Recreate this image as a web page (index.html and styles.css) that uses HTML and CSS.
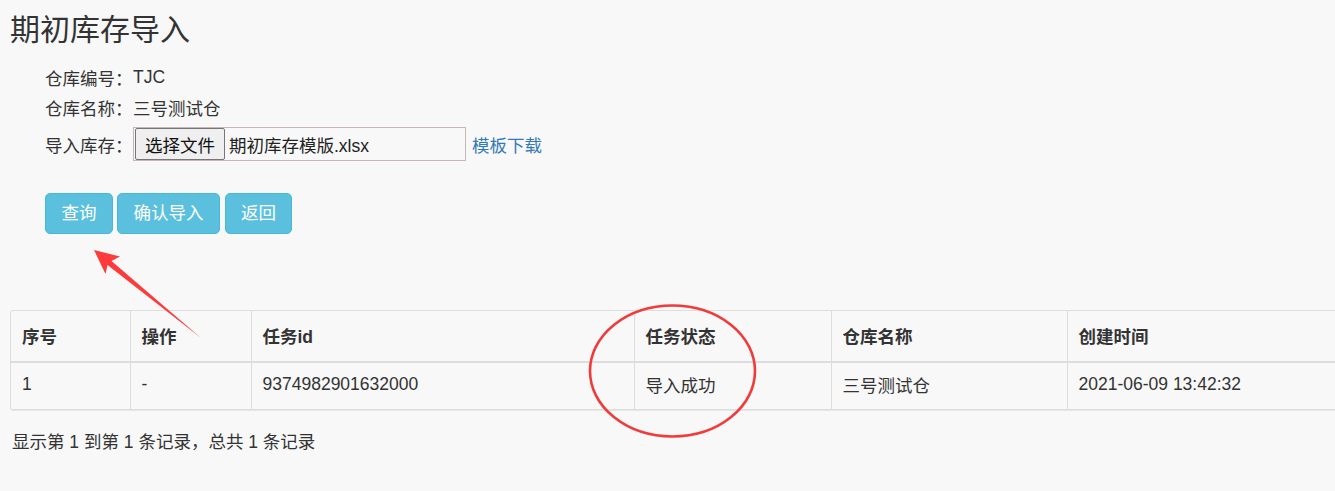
FILE: index.html
```html
<!DOCTYPE html>
<html lang="zh-CN">
<head>
<meta charset="utf-8">
<title>期初库存导入</title>
<link rel="stylesheet" href="styles.css">
</head>
<body>
<div class="page">
  <h1 class="title">期初库存导入</h1>
  <div class="form">
    <div class="row"><span class="label">仓库编号：</span><span>TJC</span></div>
    <div class="row"><span class="label">仓库名称：</span><span>三号测试仓</span></div>
    <div class="row file-row">
      <span class="label">导入库存：</span>
      <div class="file-box"><span class="file-btn">选择文件</span><span class="file-name">期初库存模版.xlsx</span></div>
      <a class="link" href="#">模板下载</a>
    </div>
    <div class="actions">
      <button class="btn">查询</button>
      <button class="btn">确认导入</button>
      <button class="btn btn-back">返回</button>
    </div>
  </div>
  <div class="table-wrap">
    <table class="grid">
      <colgroup>
        <col class="c1"><col class="c2"><col class="c3"><col class="c4"><col class="c5"><col>
      </colgroup>
      <thead>
        <tr><th>序号</th><th>操作</th><th>任务id</th><th>任务状态</th><th>仓库名称</th><th>创建时间</th></tr>
      </thead>
      <tbody>
        <tr><td>1</td><td>-</td><td>9374982901632000</td><td>导入成功</td><td>三号测试仓</td><td>2021-06-09 13:42:32</td></tr>
      </tbody>
    </table>
  </div>
  <div class="footer">显示第 1 到第 1 条记录，总共 1 条记录</div>
</div>
<svg class="annot" width="1335" height="491" viewBox="0 0 1335 491">
  <polygon points="94,250 120,256.5 111.5,261 201,338 107.5,265 105.5,274" fill="#fd3b3b"/>
  <ellipse cx="672.5" cy="371" rx="82.5" ry="65.5" fill="none" stroke="#f23a3a" stroke-width="2.6"/>
</svg>
</body>
</html>
```

FILE: styles.css
```css
html, body {
  margin: 0;
  padding: 0;
  overflow: hidden;
  background: #f8f8f8;
}
body {
  font-family: "Liberation Sans", "Noto Sans CJK SC", sans-serif;
  font-size: 17.5px;
  color: #333;
  position: relative;
  width: 1335px;
  height: 491px;
}
.page {
  padding-left: 10px;
}
.title {
  margin: 13px 0 0;
  font-size: 30px;
  font-weight: normal;
  line-height: 33px;
}
.form {
  padding-left: 35px;
  margin-top: 16px;
}
.row {
  display: flex;
  align-items: center;
  height: 30px;
}
.label {
  width: 88px;
  flex: none;
}
.file-row {
  margin-top: 5px;
  height: 34px;
}
.file-box {
  box-sizing: border-box;
  width: 333px;
  height: 34px;
  border: 1px solid #c7b6b6;
  display: flex;
  align-items: flex-end;
  padding: 0 0 0 1px;
}
.file-btn {
  box-sizing: border-box;
  height: 32px;
  width: 90px;
  border: 1px solid #767676;
  border-radius: 2px;
  background: #efefef;
  color: #111;
  display: flex;
  align-items: center;
  justify-content: center;
  font-size: 17.5px;
}
.file-name {
  margin-left: 4px;
  align-self: center;
  color: #222;
}
.link {
  margin-left: 6px;
  color: #337ab7;
  text-decoration: none;
}
.actions {
  margin-top: 32px;
  display: flex;
  gap: 4px;
}
.btn {
  box-sizing: border-box;
  height: 41px;
  padding: 0 15.5px;
  border: 1px solid #46b8da;
  background: #5bc0de;
  color: #fff;
  border-radius: 5px;
  font-family: inherit;
  font-size: 17.5px;
  line-height: 1;
}
.btn-back {
  margin-left: 1px;
  padding: 0 15px;
}
.table-wrap {
  margin-top: 76px;
  width: 1345px;
  border: 1px solid #ddd;
  border-radius: 3px;
  box-shadow: 0 1px 0 #e6e6e6;
  overflow: hidden;
}
.grid {
  width: 100%;
  border-collapse: collapse;
  table-layout: fixed;
}
.c1 { width: 119px; }
.c2 { width: 121px; }
.c3 { width: 383px; }
.c4 { width: 197px; }
.c5 { width: 236px; }
.grid th, .grid td {
  text-align: left;
  padding: 0 11px;
  border-left: 1px solid #ddd;
  white-space: nowrap;
}
.grid th:first-child, .grid td:first-child {
  border-left: none;
}
.grid th {
  height: 49px;
  padding-bottom: 1px;
  font-weight: bold;
  border-bottom: 2px solid #ddd;
}
.grid td {
  height: 43px;
  padding-bottom: 3px;
}
.footer {
  margin-top: 20px;
  line-height: 24px;
  padding-left: 2px;
}
.annot {
  position: absolute;
  left: 0;
  top: 0;
  pointer-events: none;
}
```
